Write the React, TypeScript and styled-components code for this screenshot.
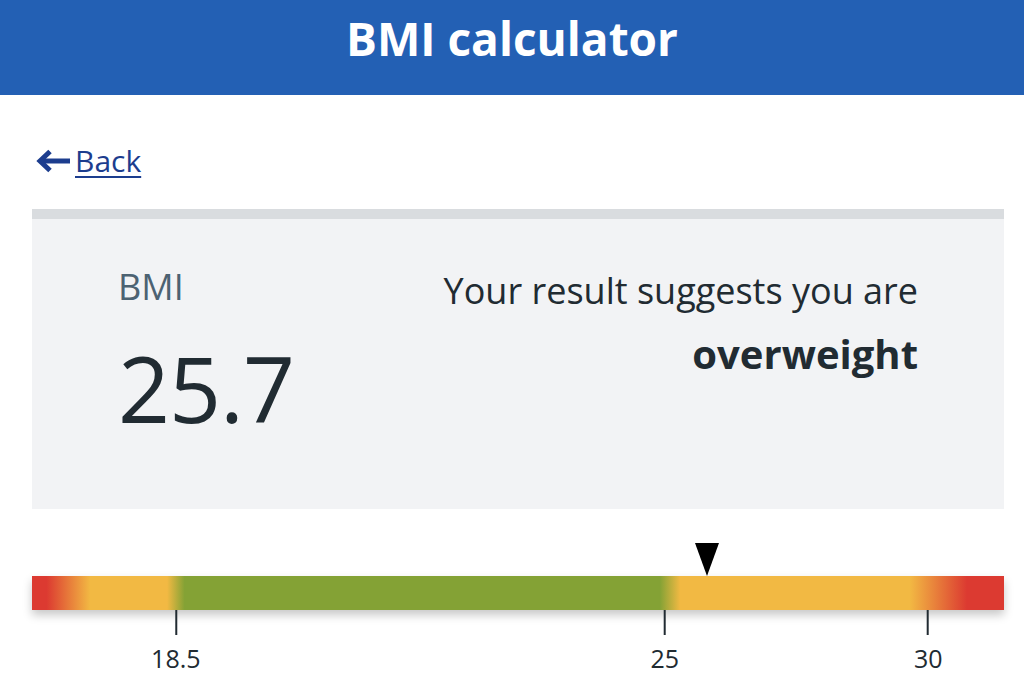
import React from 'react'
import styled, { createGlobalStyle } from 'styled-components'

const GlobalStyle = createGlobalStyle`
  html, body {
    margin: 0;
    padding: 0;
    background: #ffffff;
    font-family: "Open Sans", "Noto Sans", Arial, sans-serif;
    color: #212b32;
  }
`

const Header = styled.header`
  height: 95px;
  box-sizing: border-box;
  padding-top: 15px;
  background: #2360b4;
  text-align: center;
`

const Title = styled.h1`
  margin: 0;
  font-size: 46px;
  line-height: 46px;
  font-weight: 700;
  color: #ffffff;
`

const Main = styled.main`
  padding: 0 20px 0 32px;
`

const BackLink = styled.a`
  display: flex;
  width: fit-content;
  align-items: center;
  gap: 5px;
  margin-top: 51px;
  margin-left: 4px;
  font-size: 30px;
  line-height: 30px;
  color: #1c3d8e;
  text-decoration: none;
  cursor: pointer;

  span {
    text-decoration: underline;
    text-decoration-thickness: 2px;
    text-underline-offset: 4px;
  }
`

const Card = styled.section`
  margin-top: 33px;
  height: 300px;
  box-sizing: border-box;
  border-top: 10px solid #d9dcdf;
  background: #f2f3f5;
  padding: 0 86px;
  display: flex;
  justify-content: space-between;
`

const Left = styled.div`
  padding-top: 50px;
`

const Label = styled.div`
  font-size: 36px;
  line-height: 36px;
  color: #4c6272;
`

const Value = styled.div`
  margin-top: 38px;
  font-size: 91px;
  line-height: 91px;
  letter-spacing: -1px;
  color: #212b32;
`

const Right = styled.div`
  padding-top: 54px;
  text-align: right;
`

const Sentence = styled.div`
  font-size: 36px;
  line-height: 36px;
  color: #212b32;
`

const Category = styled.div`
  margin-top: 25px;
  font-size: 40px;
  line-height: 40px;
  font-weight: 700;
  color: #212b32;
`

const Scale = styled.div`
  margin-top: 34px;
`

const MarkerRow = styled.div`
  position: relative;
  height: 33px;
`

const Marker = styled.div<{ $at: number }>`
  position: absolute;
  left: ${p => p.$at}%;
  bottom: 0;
  transform: translateX(-50%);
  width: 0;
  height: 0;
  border-left: 12px solid transparent;
  border-right: 12px solid transparent;
  border-top: 33px solid #000000;
`

const Bar = styled.div`
  height: 34px;
  box-shadow: 0 5px 9px rgba(0, 0, 0, 0.22);
  background: linear-gradient(
    to right,
    #dc3a31 0%,
    #dc3a31 1.5%,
    #f2b943 6%,
    #f2b943 13.9%,
    #84a235 15.7%,
    #84a235 64.6%,
    #f2b943 66.7%,
    #f2b943 90.3%,
    #dc3a31 96.2%,
    #dc3a31 100%
  );
`

const TickRow = styled.div`
  position: relative;
  height: 70px;
`

const Tick = styled.div<{ $at: number }>`
  position: absolute;
  top: 0;
  left: ${p => p.$at}%;
  transform: translateX(-50%);
  display: flex;
  flex-direction: column;
  align-items: center;

  &::before {
    content: '';
    width: 2px;
    height: 25px;
    background: #212b32;
  }
`

const TickLabel = styled.span`
  margin-top: 11px;
  font-size: 25px;
  line-height: 25px;
  color: #212b32;
`

const ticks = [
  { label: '18.5', at: 14.8 },
  { label: '25', at: 65.1 },
  { label: '30', at: 92.2 },
]

const ArrowLeft = () => (
  <svg width="34" height="24" viewBox="0 0 34 24" fill="none">
    <path d="M34 12H6" stroke="#1c3d8e" strokeWidth="5" />
    <path d="M14 2.5L4 12l10 9.5" stroke="#1c3d8e" strokeWidth="5" strokeLinejoin="miter" />
  </svg>
)

export default function App() {
  return (
    <>
      <GlobalStyle />
      <Header>
        <Title>BMI calculator</Title>
      </Header>
      <Main>
        <BackLink>
          <ArrowLeft />
          <span>Back</span>
        </BackLink>
        <Card>
          <Left>
            <Label>BMI</Label>
            <Value>25.7</Value>
          </Left>
          <Right>
            <Sentence>Your result suggests you are</Sentence>
            <Category>overweight</Category>
          </Right>
        </Card>
        <Scale>
          <MarkerRow>
            <Marker $at={69.4} />
          </MarkerRow>
          <Bar />
          <TickRow>
            {ticks.map(t => (
              <Tick key={t.label} $at={t.at}>
                <TickLabel>{t.label}</TickLabel>
              </Tick>
            ))}
          </TickRow>
        </Scale>
      </Main>
    </>
  )
}
